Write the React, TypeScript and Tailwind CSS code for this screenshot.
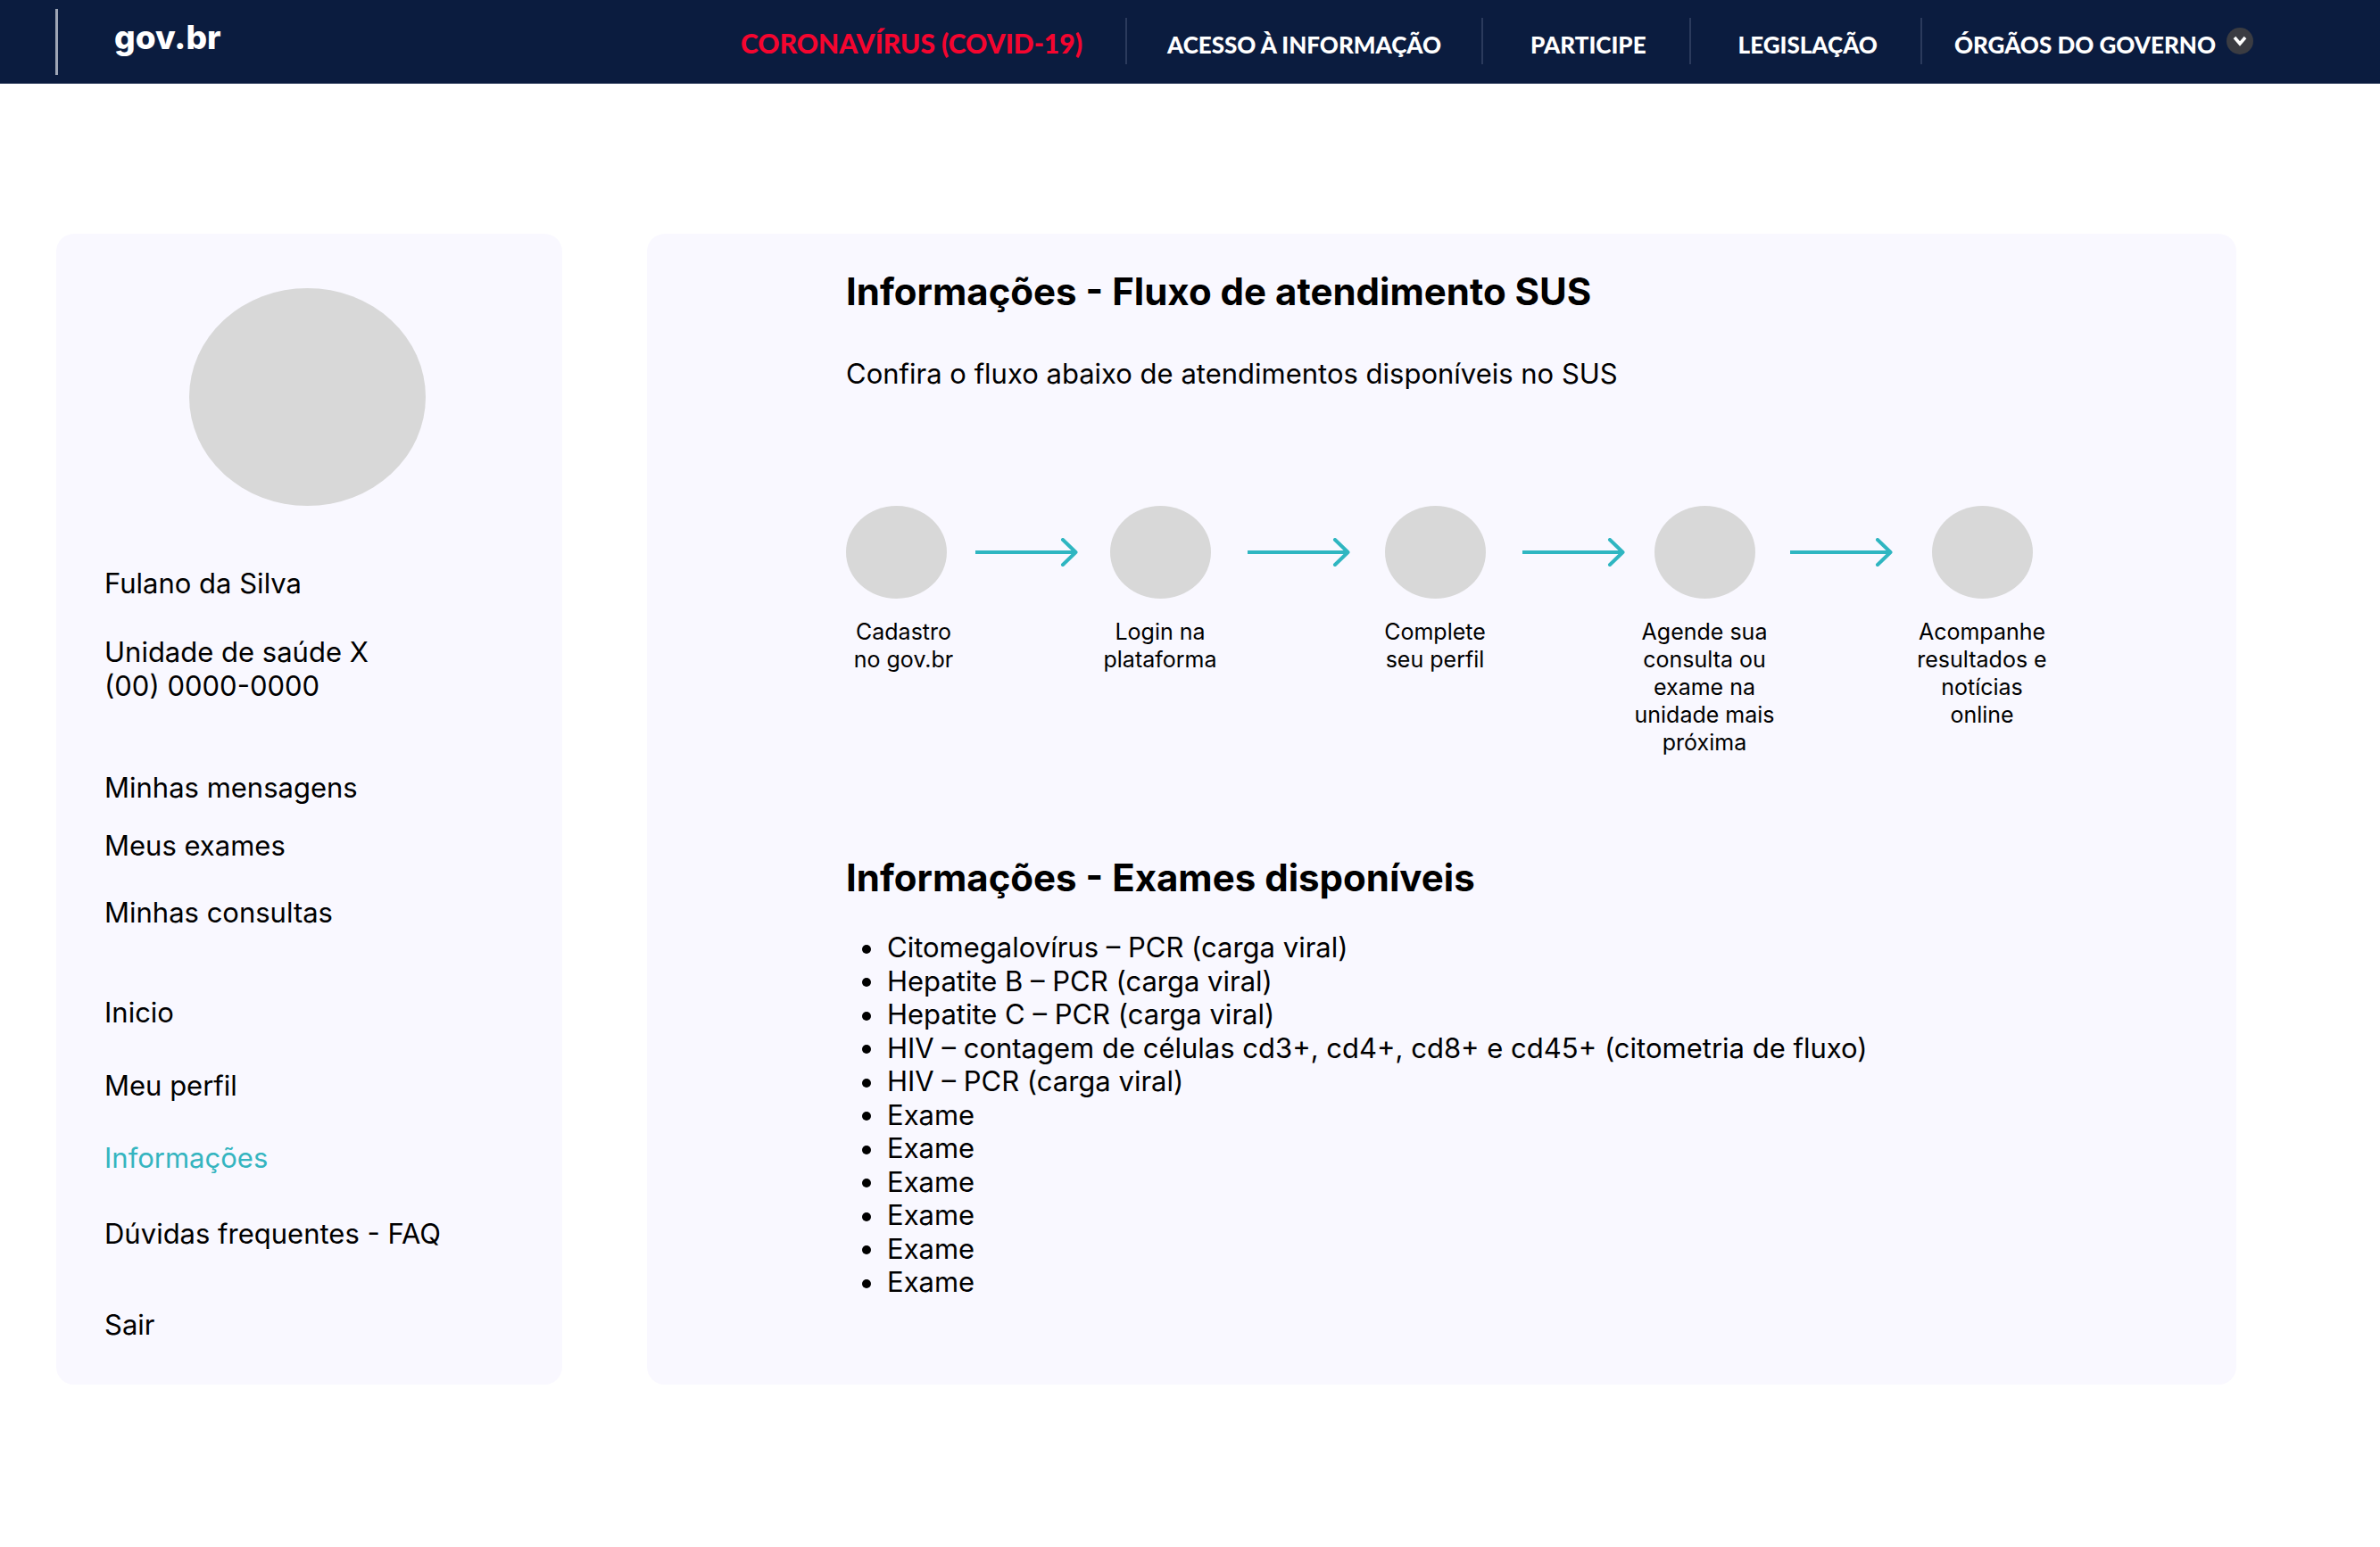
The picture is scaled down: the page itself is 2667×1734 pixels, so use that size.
import React from "react";

const steps = [
  { label: "Cadastro no gov.br", box: "w-[129px] items-start", arrow: "ml-4 mr-3" },
  { label: "Login na plataforma", box: "w-40 items-center", arrow: "ml-[18px] mr-[15px]" },
  { label: "Complete seu perfil", box: "w-40 items-center", arrow: "ml-[18px] mr-[9px]" },
  { label: "Agende sua consulta ou exame na unidade mais próxima", box: "w-40 items-center", arrow: "ml-4 mr-5" },
  { label: "Acompanhe resultados e notícias online", box: "w-40 items-center", arrow: null },
];

const exams = [
  "Citomegalovírus – PCR (carga viral)",
  "Hepatite B – PCR (carga viral)",
  "Hepatite C – PCR (carga viral)",
  "HIV – contagem de células cd3+, cd4+, cd8+ e cd45+ (citometria de fluxo)",
  "HIV – PCR (carga viral)",
  "Exame",
  "Exame",
  "Exame",
  "Exame",
  "Exame",
  "Exame",
];

const sideLinks = [
  { label: "Minhas mensagens", style: "mt-[76px]" },
  { label: "Meus exames", style: "mt-[27px]" },
  { label: "Minhas consultas", style: "mt-[37px]" },
  { label: "Inicio", style: "mt-[74px]" },
  { label: "Meu perfil", style: "mt-11" },
  { label: "Informações", style: "mt-[43px] text-[#35b5c0]" },
  { label: "Dúvidas frequentes - FAQ", style: "mt-[47px]" },
  { label: "Sair", style: "mt-16" },
];

function Arrow() {
  return (
    <svg className="h-8 w-[115px]" viewBox="0 0 115 32" fill="none" stroke="#2fb6c1" strokeWidth="4" aria-hidden="true">
      <path d="M0 16H112" />
      <path d="M98 2L112.500 16L98 30" strokeLinecap="round" strokeLinejoin="round" />
    </svg>
  );
}

function Separator() {
  return <span className="mt-1 h-[52px] w-0.5 shrink-0 bg-[#2b3a5c]" />;
}

function Header() {
  return (
    <header className="flex h-[94px] items-start border-b border-[#46536e] bg-[#0b1c3f] pl-[62px] font-['Lato',sans-serif] text-white">
      <span className="mt-2.5 h-[74px] w-[3px] bg-[#9fa6b6]" />
      <a href="#inicio" className="ml-[63px] mt-4 font-['Inter',sans-serif] text-[37px] font-extrabold leading-[52px]">
        gov.br
      </a>
      <nav className="ml-auto mr-[142px] mt-4 flex items-center whitespace-nowrap text-[26px] font-black leading-9">
        <a href="#covid" className="mr-12 pt-2 text-[30px] text-[#f5052f]">CORONAVÍRUS (COVID-19)</a>
        <Separator />
        <a href="#acesso" className="mx-[45px] pt-3">ACESSO À INFORMAÇÃO</a>
        <Separator />
        <a href="#participe" className="ml-[53px] mr-12 pt-3">PARTICIPE</a>
        <Separator />
        <a href="#legislacao" className="ml-[53px] mr-12 pt-3">LEGISLAÇÃO</a>
        <Separator />
        <button type="button" className="ml-9 flex items-center gap-3 font-black">
          <span className="pt-3">ÓRGÃOS DO GOVERNO</span>
          <svg className="mt-1 size-[30px]" viewBox="0 0 30 30" fill="none" aria-hidden="true">
            <circle cx="15" cy="15" r="15" fill="#3b3c42" />
            <path d="M9 11L15 18L21 11" stroke="#fff" strokeWidth="3.500" />
          </svg>
        </button>
      </nav>
    </header>
  );
}

export default function App() {
  return (
    <div className="min-h-screen bg-white font-['Inter',sans-serif] text-[31px] leading-[38px] text-black">
      <Header />
      <div className="flex items-stretch gap-[95px] pb-20 pl-[63px] pr-[161px] pt-[168px]">
        <aside className="w-[567px] shrink-0 rounded-[20px] bg-[#f9f8ff] pb-12 pl-[54px] pr-6 pt-[61px]">
          <div className="ml-[95px] h-[244px] w-[265px] rounded-[50%] bg-[#d8d8d8]" />
          <p className="mt-[68px]">Fulano da Silva</p>
          <p className="mt-[39px]">
            Unidade de saúde X<br />
            (00) 0000-0000
          </p>
          <nav className="flex flex-col items-start">
            {sideLinks.map((l) => (
              <a key={l.label} href="#menu" className={l.style}>{l.label}</a>
            ))}
          </nav>
        </aside>

        <main className="min-w-0 flex-1 rounded-[20px] bg-[#f9f8ff] pl-[223px] pt-10">
          <h1 className="text-[42px] font-bold leading-[50px]">Informações - Fluxo de atendimento SUS</h1>
          <p className="mt-12">Confira o fluxo abaixo de atendimentos disponíveis no SUS</p>

          <ol className="mt-[129px] flex items-start text-[25px] leading-[31px]">
            {steps.map((s) => (
              <li key={s.label} className="flex items-start">
                <div className={`flex flex-col ${s.box}`}>
                  <span className="h-[104px] w-[113px] rounded-[50%] bg-[#d8d8d8]" />
                  <p className="mt-[22px] w-full text-center">{s.label}</p>
                </div>
                {s.arrow && (
                  <div className={`flex h-[104px] items-center ${s.arrow}`}>
                    <Arrow />
                  </div>
                )}
              </li>
            ))}
          </ol>

          <h2 className="mt-[111px] text-[42px] font-bold leading-[50px]">Informações - Exames disponíveis</h2>
          <ul className="mt-[34px] flex min-h-[412px] flex-col justify-between leading-[37px]">
            {exams.map((e, i) => (
              <li key={i} className="flex items-center">
                <span className="ml-[18px] mr-[18px] mt-1 size-2.5 rounded-full bg-black" />
                {e}
              </li>
            ))}
          </ul>
        </main>
      </div>
    </div>
  );
}
